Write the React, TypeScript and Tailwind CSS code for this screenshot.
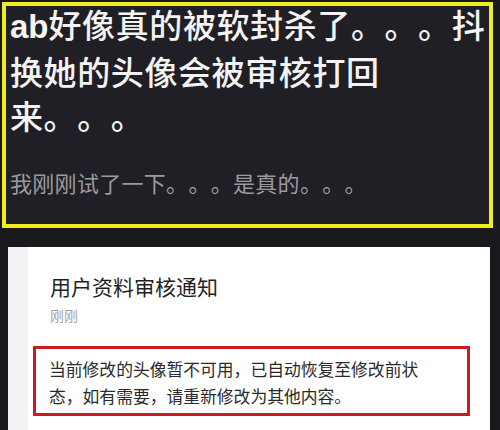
export default function App() {
  const cjk = { fontFamily: '"Noto Sans CJK SC", "Noto Sans", sans-serif' };

  return (
    <div
      className="w-[500px] h-[430px] overflow-hidden bg-[#19191d] pt-[2px] [text-spacing-trim:space-all]"
      style={cjk}
    >
      {/* highlighted comment */}
      <div className="ml-[2px] w-[491px] h-[226px] border-4 border-[#f0ec24] bg-[#1f1f25] pl-[4px]">
        <div className="-mt-[4px] text-[33px] leading-[44px] tracking-[0.6px] font-medium text-[#f4f4f4] whitespace-nowrap">
          <div>
            <span className="font-bold tracking-normal" style={{ fontFamily: '"Liberation Sans", Arial, sans-serif' }}>ab</span>
            好像真的被软封杀了。。。抖
          </div>
          <div>换她的头像会被审核打回</div>
          <div>来。。。</div>
        </div>
        <div className="mt-[30px] text-[22px] leading-[30px] tracking-[0.3px] text-[#9b9b9e] whitespace-nowrap">
          我刚刚试了一下。。。是真的。。。
        </div>
      </div>

      {/* notification card */}
      <div className="mt-[19px] ml-[8px] w-[482px] h-[190px] bg-white flex">
        <div className="w-[20px] bg-[#f3f3f5]" />
        <div className="flex-1 pt-[24px]">
          <div className="pl-[22px] text-[21px] leading-[30px] text-[#1f1f1f]">用户资料审核通知</div>
          <div className="pl-[22px] mt-[4px] text-[14px] leading-[20px] text-[#a3a3a3]">刚刚</div>
          <div className="mt-[21px] ml-[5px] w-[437px] h-[70px] border-[3px] border-[#cc1a22] pl-[13px] pt-[7px] text-[16.8px] leading-[27px] text-[#2a2a2a] whitespace-nowrap">
            <div>当前修改的头像暂不可用，已自动恢复至修改前状</div>
            <div>态，如有需要，请重新修改为其他内容。</div>
          </div>
        </div>
      </div>
    </div>
  );
}
